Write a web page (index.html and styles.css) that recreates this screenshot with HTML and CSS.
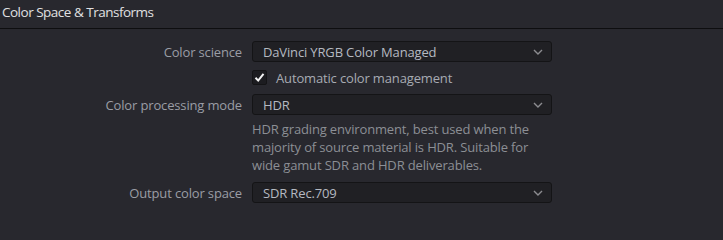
FILE: index.html
```html
<!DOCTYPE html>
<html>
<head>
<meta charset="utf-8">
<link rel="stylesheet" href="styles.css">
</head>
<body>
<div class="panel">
  <div class="header">Color Space &amp; Transforms</div>
  <div class="form">
    <div class="label">Color science</div>
    <div class="select"><span>DaVinci YRGB Color Managed</span><svg class="chev" width="10" height="6" viewBox="0 0 10 6"><path d="M1 1 L5 5 L9 1" fill="none" stroke="#8c8c90" stroke-width="1.4"/></svg></div>

    <div class="label"></div>
    <div class="check-row"><span class="checkbox"><svg width="13" height="13" viewBox="0 0 13 13"><path d="M2.5 6.8 L5.2 9.6 L10.5 2.8" fill="none" stroke="#f2f2f2" stroke-width="2"/></svg></span><span class="check-label">Automatic color management</span></div>

    <div class="label">Color processing mode</div>
    <div class="select"><span>HDR</span><svg class="chev" width="10" height="6" viewBox="0 0 10 6"><path d="M1 1 L5 5 L9 1" fill="none" stroke="#8c8c90" stroke-width="1.4"/></svg></div>

    <div class="label"></div>
    <div class="desc">HDR grading environment, best used when the majority of source material is HDR. Suitable for wide gamut SDR and HDR deliverables.</div>

    <div class="label">Output color space</div>
    <div class="select"><span>SDR Rec.709</span><svg class="chev" width="10" height="6" viewBox="0 0 10 6"><path d="M1 1 L5 5 L9 1" fill="none" stroke="#8c8c90" stroke-width="1.4"/></svg></div>
  </div>
</div>
</body>
</html>
```
FILE: styles.css
```css
html, body {
  margin: 0;
  padding: 0;
  background: #28282e;
  height: 100%;
}
.panel {
  font-family: "Open Sans", "Noto Sans", sans-serif;
  font-size: 13px;
  letter-spacing: -0.15px;
}
.header {
  height: 28px;
  line-height: 25px;
  padding-left: 2px;
  font-size: 13.5px;
  letter-spacing: -0.5px;
  color: #e0e0e2;
  border-bottom: 1px solid #0e0e10;
  box-sizing: content-box;
}
.form {
  display: grid;
  grid-template-columns: 242px 300px;
  column-gap: 10px;
  align-items: center;
  padding-top: 12px;
}
.label {
  text-align: right;
  color: #9a9da5;
}
.select {
  height: 21px;
  box-sizing: border-box;
  border: 1px solid #141416;
  border-radius: 3px;
  background: #202024;
  display: flex;
  align-items: center;
  justify-content: space-between;
  padding: 0 8px 0 10px;
  color: #b5b9c1;
}
.chev { display: block; }
.check-row {
  display: flex;
  align-items: center;
  height: 15px;
  margin: 8px 0 9px;
}
.checkbox {
  width: 15px;
  height: 15px;
  box-sizing: border-box;
  border: 1px solid #141416;
  border-radius: 2px;
  background: #1c1c20;
  display: flex;
  align-items: center;
  justify-content: center;
}
.checkbox svg { display: block; }
.check-label {
  margin-left: 9px;
  color: #a7abb3;
}
.desc {
  color: #8c8f95;
  line-height: 18px;
  padding: 5px 0 8px;
}
```
